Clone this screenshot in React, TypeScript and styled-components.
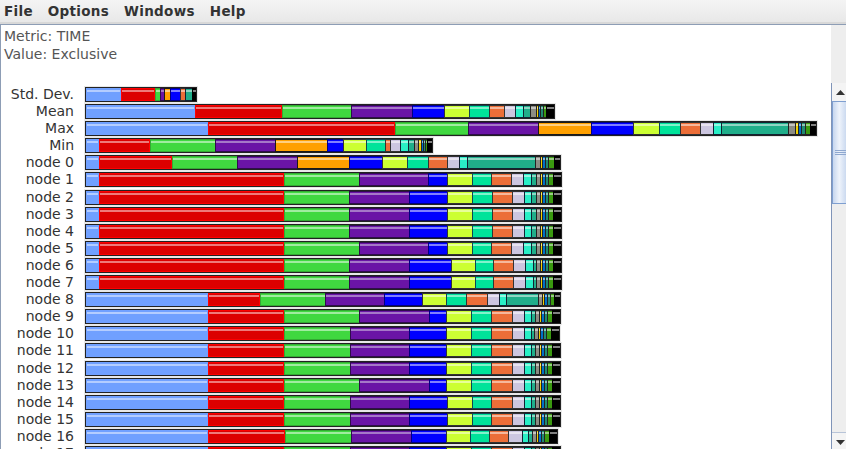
import * as React from 'react';
import styled, { createGlobalStyle } from 'styled-components';

const Global = createGlobalStyle`
  html, body { margin: 0; padding: 0; background: #fff; overflow: hidden; }
`;

const Window = styled.div`
  width: 846px;
  height: 449px;
  display: flex;
  flex-direction: column;
  overflow: hidden;
  font-family: 'DejaVu Sans', sans-serif;
`;
const MenuBar = styled.div`
  height: 22px;
  flex: none;
  display: flex;
  gap: 15px;
  padding: 0 4px;
  align-items: center;
  background: linear-gradient(#f4f4f4, #e8e8e8);
  border-bottom: 2px solid #d8d8d8;
`;
const MenuItem = styled.span`
  font-size: 13.5px;
  font-weight: bold;
  letter-spacing: 0.3px;
  color: #333;
`;
const Content = styled.div`
  flex: 1;
  min-height: 0;
  display: flex;
  flex-direction: column;
  border-left: 1px solid #8d9db5;
  border-top: 1px solid #8d9db5;
`;
const InfoRow = styled.div`
  height: 58px;
  flex: none;
  display: flex;
`;
const Info = styled.div`
  flex: 1;
  padding: 2px 3px 0;
  font-size: 14px;
  line-height: 18px;
  color: #555;
`;
const Gutter = styled.div`
  width: 15px;
  flex: none;
  background: #eeeeee;
`;
const Body = styled.div`
  flex: 1;
  min-height: 0;
  display: flex;
`;
const Chart = styled.div`
  width: 830px;
  flex: none;
  overflow: hidden;
  padding-top: 4px;
`;
const Row = styled.div`
  height: 17.1px;
  display: flex;
  align-items: flex-start;
`;
const Label = styled.div`
  width: 73px;
  flex: none;
  text-align: right;
  font-size: 14px;
  line-height: 15px;
  color: #333;
`;
const Track = styled.div`
  margin-left: 11px;
  display: flex;
  height: 13px;
  padding: 1px;
  background: #222;
  box-shadow: 0 0 0 1px #e8e8e8;
`;
const Segment = styled.div<{ $fill: string; $light: string; $edge: string; $closed: boolean }>`
  height: 100%;
  box-sizing: border-box;
  border: 1px solid ${p => p.$edge};
  border-right-width: ${p => (p.$closed ? 1 : 0)}px;
  background: linear-gradient(
    ${p => p.$fill} 0 1px,
    ${p => p.$light} 1px 3px,
    ${p => p.$fill} 3px
  );
`;
const Scrollbar = styled.div`
  width: 17px;
  height: 368px;
  flex: none;
  display: flex;
  flex-direction: column;
  background: #eeeeee;
  border-left: 1px solid #7f94b8;
  box-sizing: border-box;
`;
const ArrowButton = styled.div`
  height: 18px;
  flex: none;
  display: flex;
  align-items: center;
  justify-content: center;
  background: #f4f4f4;
`;
const Thumb = styled.div`
  height: 103px;
  flex: none;
  box-sizing: border-box;
  border: 1px solid #7f9fd0;
  background: linear-gradient(90deg, #c6d6ee, #eef3fb 45%, #c6d6ee);
  display: flex;
  flex-direction: column;
  align-items: center;
  justify-content: center;
  gap: 1px;
`;
const Grip = styled.span`
  width: 11px;
  height: 1px;
  background: #8fa8d0;
`;
const TrackRest = styled.div`
  flex: 1;
  border-bottom: 1px solid #b8c4d8;
`;

type Palette = { fill: string; light: string; edge: string };
const P: Record<string, Palette> = {
  sky: { fill: '#70a0ff', light: '#b4cdff', edge: '#70a0ff' },
  red: { fill: '#dc0000', light: '#ee7a7a', edge: '#ff0000' },
  green: { fill: '#40d840', light: '#a0eca0', edge: '#33aa33' },
  purple: { fill: '#6a14a6', light: '#a578c8', edge: '#2f0c4c' },
  orange: { fill: '#ffa000', light: '#ffd080', edge: '#1a1a1a' },
  blue: { fill: '#0000ff', light: '#8080ff', edge: '#000080' },
  lime: { fill: '#ccff33', light: '#e8ff9a', edge: '#333' },
  mint: { fill: '#00e39a', light: '#80f2cc', edge: '#145' },
  coral: { fill: '#ec6e38', light: '#f6b89c', edge: '#333' },
  lav: { fill: '#ccc6e0', light: '#e8e4f0', edge: '#333' },
  aqua: { fill: '#29efc6', light: '#96f7e2', edge: '#123' },
  teal: { fill: '#20ae8a', light: '#8fd6c4', edge: '#123' },
  gray: { fill: '#8c8c84', light: '#c4c4c0', edge: '#222' },
  gold: { fill: '#f0d000', light: '#f8e880', edge: '#222' },
  azure: { fill: '#0070c8', light: '#80b8e4', edge: '#222' },
  sea: { fill: '#208a70', light: '#90c4b8', edge: '#222' },
  leaf: { fill: '#3a9a10', light: '#9ccc88', edge: '#222' },
  black: { fill: '#000000', light: '#808080', edge: '#000000' },
};

const MAIN = ['sky', 'red', 'green', 'purple', 'blue', 'lime', 'mint', 'coral', 'lav', 'aqua', 'teal', 'gray', 'gold', 'azure', 'sea', 'leaf', 'black'];
const WITH_ORANGE = ['sky', 'red', 'green', 'purple', 'orange', 'blue', 'lime', 'mint', 'coral', 'lav', 'aqua', 'teal', 'gray', 'gold', 'azure', 'sea', 'leaf', 'black'];
const STD = ['sky', 'red', 'green', 'purple', 'orange', 'blue', 'coral', 'teal', 'black'];

// the thin slices at the end of a bar are nearly the same from node to node
const tail = (e: number) => [e - 25, e - 21, e - 19, e - 16, e - 13, e - 8, e];

const rows: { name: string; keys: string[]; stops: number[] }[] = [
  { name: 'Std. Dev.', keys: STD, stops: [121, 155, 160, 164, 170, 180, 185, 192, 196] },
  { name: 'Mean', keys: MAIN, stops: [195, 282, 351, 412, 444, 469, 489, 504, 515, 523, 530, 536, 538, 540, 543, 546, 554] },
  { name: 'Max', keys: WITH_ORANGE, stops: [208, 395, 468, 538, 591, 633, 659, 680, 700, 713, 721, 788, 795, 798, 801, 805, 810, 816] },
  { name: 'Min', keys: WITH_ORANGE, stops: [99, 150, 215, 275, 327, 343, 366, 385, 390, 400, 408, 414, 418, 421, 423, 425, 427, 432] },
  { name: 'node 0', keys: WITH_ORANGE, stops: [99, 172, 237, 297, 349, 382, 407, 428, 447, 459, 467, 535, 540, 542, 545, 548, 554, 560] },
  { name: 'node 1', keys: MAIN, stops: [99, 284, 359, 428, 447, 472, 491, 511, 523, 531, ...tail(561)] },
  { name: 'node 2', keys: MAIN, stops: [99, 284, 349, 409, 447, 472, 492, 512, 524, 531, ...tail(561)] },
  { name: 'node 3', keys: MAIN, stops: [99, 284, 349, 409, 447, 472, 492, 512, 524, 531, ...tail(561)] },
  { name: 'node 4', keys: MAIN, stops: [99, 284, 349, 409, 447, 472, 492, 512, 524, 531, ...tail(561)] },
  { name: 'node 5', keys: MAIN, stops: [99, 284, 359, 428, 447, 472, 491, 511, 523, 531, ...tail(561)] },
  { name: 'node 6', keys: MAIN, stops: [99, 284, 349, 409, 451, 475, 493, 513, 525, 533, ...tail(561)] },
  { name: 'node 7', keys: MAIN, stops: [99, 284, 349, 409, 451, 475, 493, 513, 525, 533, ...tail(561)] },
  { name: 'node 8', keys: MAIN, stops: [208, 260, 325, 384, 422, 446, 466, 487, 499, 506, 538, 542, 544, 547, 550, 554, 560] },
  { name: 'node 9', keys: MAIN, stops: [208, 284, 359, 429, 446, 471, 491, 512, 524, 531, ...tail(560)] },
  { name: 'node 10', keys: MAIN, stops: [208, 284, 350, 409, 446, 471, 491, 512, 524, 531, ...tail(559)] },
  { name: 'node 11', keys: MAIN, stops: [208, 284, 350, 409, 446, 471, 491, 512, 524, 531, ...tail(560)] },
  { name: 'node 12', keys: MAIN, stops: [208, 284, 350, 409, 446, 471, 491, 512, 524, 531, ...tail(560)] },
  { name: 'node 13', keys: MAIN, stops: [208, 284, 359, 429, 446, 471, 491, 512, 524, 531, ...tail(560)] },
  { name: 'node 14', keys: MAIN, stops: [208, 284, 350, 409, 447, 472, 491, 512, 524, 531, ...tail(560)] },
  { name: 'node 15', keys: MAIN, stops: [208, 284, 350, 409, 447, 472, 491, 512, 524, 531, ...tail(560)] },
  { name: 'node 16', keys: MAIN, stops: [208, 285, 351, 411, 446, 470, 489, 508, 522, 528, ...tail(557)] },
  { name: 'node 17', keys: MAIN, stops: [208, 284, 350, 409, 446, 471, 491, 512, 524, 531, ...tail(560)] },
];

const BAR_START = 86;

const Bar = ({ keys, stops }: { keys: string[]; stops: number[] }) => (
  <Track>
    {stops.map((end, i) => {
      const start = i === 0 ? BAR_START : stops[i - 1];
      const c = P[keys[i]];
      return (
        <Segment
          key={i}
          $fill={c.fill}
          $light={c.light}
          $edge={c.edge}
          $closed={keys[i] === 'red' || keys[i] === 'sky'}
          style={{ width: end - start }}
        />
      );
    })}
  </Track>
);

export default function App() {
  return (
    <Window>
      <Global />
      <MenuBar>
        <MenuItem>File</MenuItem>
        <MenuItem>Options</MenuItem>
        <MenuItem>Windows</MenuItem>
        <MenuItem>Help</MenuItem>
      </MenuBar>
      <Content>
        <InfoRow>
          <Info>
            Metric: TIME
            <br />
            Value: Exclusive
          </Info>
          <Gutter />
        </InfoRow>
        <Body>
          <Chart>
            {rows.map(r => (
              <Row key={r.name}>
                <Label>{r.name}</Label>
                <Bar keys={r.keys} stops={r.stops} />
              </Row>
            ))}
          </Chart>
          <Scrollbar>
            <ArrowButton>
              <svg width="9" height="5" viewBox="0 0 9 5"><path d="M4.5 0 9 5H0z" fill="#333" /></svg>
            </ArrowButton>
            <Thumb>
              <Grip /><Grip /><Grip />
            </Thumb>
            <TrackRest />
            <ArrowButton>
              <svg width="9" height="5" viewBox="0 0 9 5"><path d="M0 0h9L4.5 5z" fill="#333" /></svg>
            </ArrowButton>
          </Scrollbar>
        </Body>
      </Content>
    </Window>
  );
}
